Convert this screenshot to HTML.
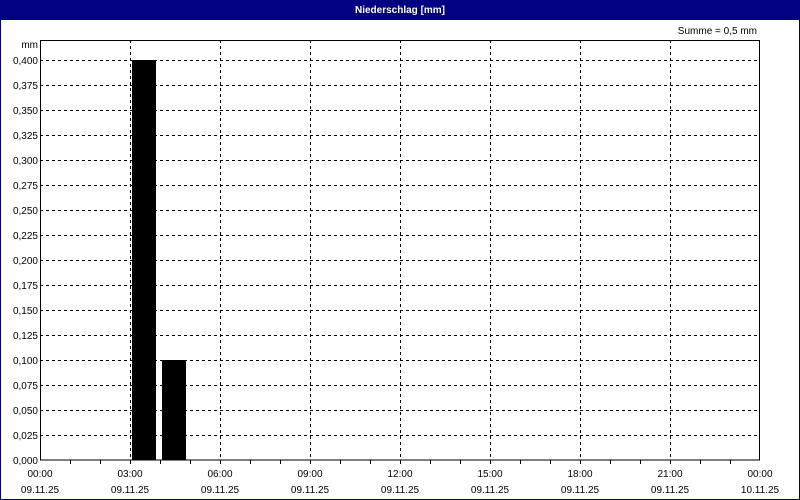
<!DOCTYPE html>
<html><head><meta charset="utf-8"><style>
html,body{margin:0;padding:0;width:800px;height:500px;overflow:hidden;background:#fff}
svg{display:block}
text{font-family:"Liberation Sans",sans-serif;font-size:10px;fill:#000}
</style></head><body>
<svg width="800" height="500" xmlns="http://www.w3.org/2000/svg">
<rect x="0" y="0" width="800" height="500" fill="#fff"/>
<rect x="0" y="0" width="800" height="20" fill="#000080"/>
<rect x="0.5" y="0.5" width="799" height="499" fill="none" stroke="#000080"/>
<text x="400" y="13" text-anchor="middle" style="fill:#fff;font-weight:bold">Niederschlag [mm]</text>
<text x="757" y="34" text-anchor="end">Summe = 0,5 mm</text>
<text x="38" y="48" text-anchor="end">mm</text>
<g stroke="#000" stroke-dasharray="3,3" stroke-width="1">
<line x1="40" y1="60.5" x2="760" y2="60.5"/><line x1="40" y1="85.5" x2="760" y2="85.5"/><line x1="40" y1="110.5" x2="760" y2="110.5"/><line x1="40" y1="135.5" x2="760" y2="135.5"/><line x1="40" y1="160.5" x2="760" y2="160.5"/><line x1="40" y1="185.5" x2="760" y2="185.5"/><line x1="40" y1="210.5" x2="760" y2="210.5"/><line x1="40" y1="235.5" x2="760" y2="235.5"/><line x1="40" y1="260.5" x2="760" y2="260.5"/><line x1="40" y1="285.5" x2="760" y2="285.5"/><line x1="40" y1="310.5" x2="760" y2="310.5"/><line x1="40" y1="335.5" x2="760" y2="335.5"/><line x1="40" y1="360.5" x2="760" y2="360.5"/><line x1="40" y1="385.5" x2="760" y2="385.5"/><line x1="40" y1="410.5" x2="760" y2="410.5"/><line x1="40" y1="435.5" x2="760" y2="435.5"/>
<line x1="130.5" y1="40" x2="130.5" y2="460"/><line x1="220.5" y1="40" x2="220.5" y2="460"/><line x1="310.5" y1="40" x2="310.5" y2="460"/><line x1="400.5" y1="40" x2="400.5" y2="460"/><line x1="490.5" y1="40" x2="490.5" y2="460"/><line x1="580.5" y1="40" x2="580.5" y2="460"/><line x1="670.5" y1="40" x2="670.5" y2="460"/>
</g>
<rect x="132" y="60" width="24" height="400" fill="#000"/>
<rect x="162" y="360" width="24" height="100" fill="#000"/>
<rect x="40.5" y="40.5" width="719" height="419.5" fill="none" stroke="#000"/>
<g stroke="#000">
<line x1="70.5" y1="460" x2="70.5" y2="464"/><line x1="100.5" y1="460" x2="100.5" y2="464"/><line x1="130.5" y1="460" x2="130.5" y2="464"/><line x1="160.5" y1="460" x2="160.5" y2="464"/><line x1="190.5" y1="460" x2="190.5" y2="464"/><line x1="220.5" y1="460" x2="220.5" y2="464"/><line x1="250.5" y1="460" x2="250.5" y2="464"/><line x1="280.5" y1="460" x2="280.5" y2="464"/><line x1="310.5" y1="460" x2="310.5" y2="464"/><line x1="340.5" y1="460" x2="340.5" y2="464"/><line x1="370.5" y1="460" x2="370.5" y2="464"/><line x1="400.5" y1="460" x2="400.5" y2="464"/><line x1="430.5" y1="460" x2="430.5" y2="464"/><line x1="460.5" y1="460" x2="460.5" y2="464"/><line x1="490.5" y1="460" x2="490.5" y2="464"/><line x1="520.5" y1="460" x2="520.5" y2="464"/><line x1="550.5" y1="460" x2="550.5" y2="464"/><line x1="580.5" y1="460" x2="580.5" y2="464"/><line x1="610.5" y1="460" x2="610.5" y2="464"/><line x1="640.5" y1="460" x2="640.5" y2="464"/><line x1="670.5" y1="460" x2="670.5" y2="464"/><line x1="700.5" y1="460" x2="700.5" y2="464"/><line x1="730.5" y1="460" x2="730.5" y2="464"/>
</g>
<g text-anchor="end">
<text x="38" y="64">0,400</text><text x="38" y="89">0,375</text><text x="38" y="114">0,350</text><text x="38" y="139">0,325</text><text x="38" y="164">0,300</text><text x="38" y="189">0,275</text><text x="38" y="214">0,250</text><text x="38" y="239">0,225</text><text x="38" y="264">0,200</text><text x="38" y="289">0,175</text><text x="38" y="314">0,150</text><text x="38" y="339">0,125</text><text x="38" y="364">0,100</text><text x="38" y="389">0,075</text><text x="38" y="414">0,050</text><text x="38" y="439">0,025</text><text x="38" y="464">0,000</text>
</g>
<g text-anchor="middle">
<text x="40" y="477">00:00</text><text x="130" y="477">03:00</text><text x="220" y="477">06:00</text><text x="310" y="477">09:00</text><text x="400" y="477">12:00</text><text x="490" y="477">15:00</text><text x="580" y="477">18:00</text><text x="670" y="477">21:00</text><text x="760" y="477">00:00</text>
<text x="40" y="493">09.11.25</text><text x="130" y="493">09.11.25</text><text x="220" y="493">09.11.25</text><text x="310" y="493">09.11.25</text><text x="400" y="493">09.11.25</text><text x="490" y="493">09.11.25</text><text x="580" y="493">09.11.25</text><text x="670" y="493">09.11.25</text><text x="760" y="493">10.11.25</text>
</g>
</svg>
</body></html>
